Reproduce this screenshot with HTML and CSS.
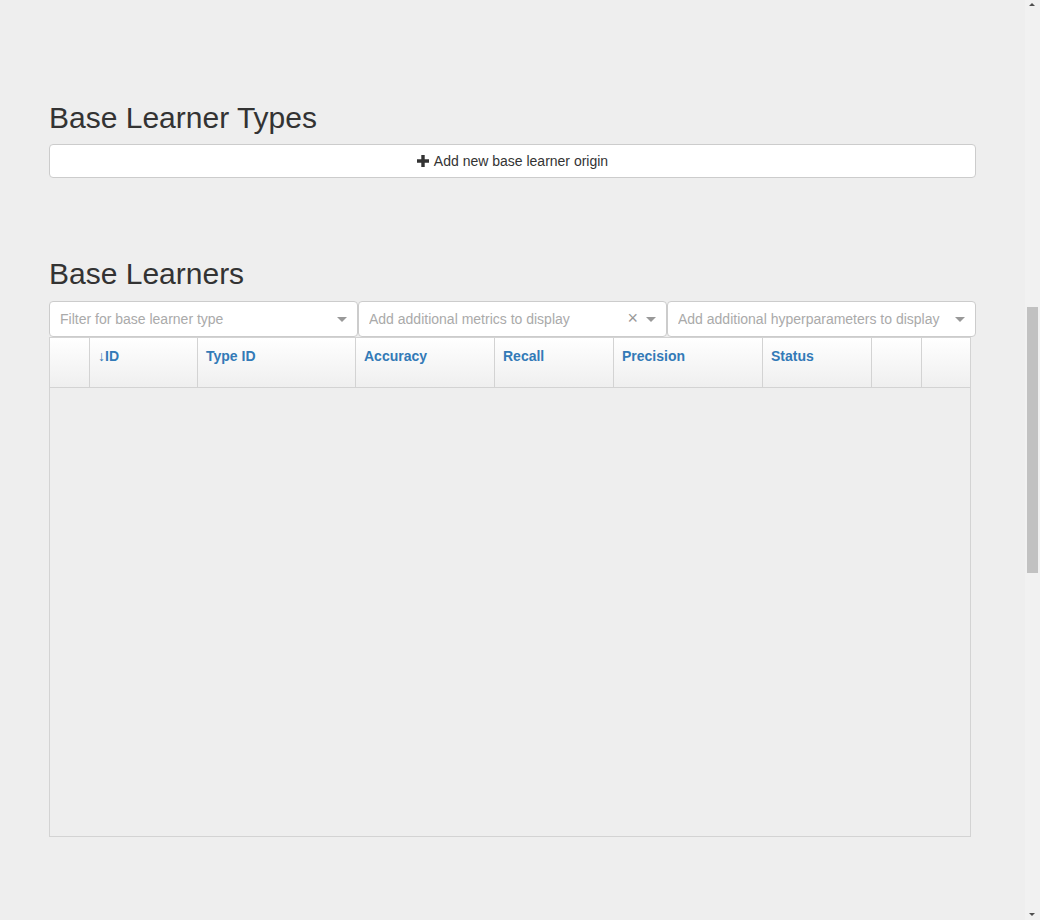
FILE: index.html
```html
<!DOCTYPE html>
<html lang="en">
<head>
<meta charset="utf-8">
<title>Base Learners</title>
<link rel="stylesheet" href="styles.css">
</head>
<body>
<div class="page">
  <section class="section section-types">
    <h2 class="title">Base Learner Types</h2>
    <button class="btn" type="button">
      <svg class="plus" width="12" height="12" viewBox="0 0 12 12" aria-hidden="true"><path d="M4.3 0h3.4v4.3H12v3.4H7.7V12H4.3V7.7H0V4.3h4.3z" fill="#333"/></svg>
      <span>Add new base learner origin</span>
    </button>
  </section>

  <section class="section section-learners">
    <h2 class="title">Base Learners</h2>
    <div class="filters">
      <div class="select">
        <span class="placeholder">Filter for base learner type</span>
        <span class="arrow"></span>
      </div>
      <div class="select">
        <span class="placeholder">Add additional metrics to display</span>
        <span class="clear">×</span>
        <span class="arrow"></span>
      </div>
      <div class="select">
        <span class="placeholder">Add additional hyperparameters to display</span>
        <span class="arrow"></span>
      </div>
    </div>
    <div class="grid">
      <div class="grid-head">
        <div class="cell c1"></div>
        <div class="cell c2"><span class="sort">↓</span>ID</div>
        <div class="cell c3">Type ID</div>
        <div class="cell c4">Accuracy</div>
        <div class="cell c5">Recall</div>
        <div class="cell c6">Precision</div>
        <div class="cell c7">Status</div>
        <div class="cell c8"></div>
        <div class="cell c9"></div>
      </div>
      <div class="grid-body"></div>
    </div>
  </section>
</div>

<div class="scrollbar" aria-hidden="true">
  <span class="sb-up"></span>
  <span class="sb-thumb"></span>
  <span class="sb-down"></span>
</div>
</body>
</html>
```

FILE: styles.css
```css
html, body {
  margin: 0;
  padding: 0;
  background: #eeeeee;
  overflow: hidden;
}

body {
  font-family: "Liberation Sans", Arial, Helvetica, sans-serif;
  font-size: 14px;
  line-height: 20px;
  color: #333333;
}

.page {
  width: 927px;
  padding-left: 49px;
  padding-top: 101px;
}

.title {
  margin: 0 0 10px 0;
  font-size: 30px;
  line-height: 33px;
  font-weight: 400;
  color: #333333;
}

.btn {
  display: flex;
  align-items: center;
  justify-content: center;
  gap: 5px;
  width: 100%;
  height: 34px;
  padding: 0 12px;
  margin: 0;
  background: #ffffff;
  border: 1px solid #cccccc;
  border-radius: 4px;
  font-family: inherit;
  font-size: 14px;
  line-height: 20px;
  color: #333333;
}

.plus {
  display: block;
  margin-top: -1px;
}

.section-learners {
  margin-top: 79px;
}

.section-learners .title {
  margin-bottom: 11px;
}

.filters {
  display: flex;
}

.select {
  position: relative;
  box-sizing: border-box;
  width: 309px;
  height: 36px;
  background: #ffffff;
  border: 1px solid #cccccc;
  border-radius: 4px;
  display: flex;
  align-items: center;
  padding: 0 10px;
}

.placeholder {
  flex: 1;
  color: #aaaaaa;
  white-space: nowrap;
  overflow: hidden;
  line-height: 34px;
}

.clear {
  color: #999999;
  font-size: 18px;
  line-height: 1;
  margin-right: 8px;
  margin-top: -3px;
}

.arrow {
  width: 0;
  height: 0;
  border-style: solid;
  border-width: 5px 5px 2.5px;
  border-color: #999999 transparent transparent;
  margin-right: 0;
  margin-top: 3px;
}

.grid {
  box-sizing: border-box;
  width: 922px;
  height: 500px;
  border: 1px solid #d3d3d3;
}

.grid-head {
  display: grid;
  grid-template-columns: 40px 108px 158px 139px 119px 149px 109px 50px 48px;
  height: 50px;
  box-sizing: border-box;
  border-bottom: 1px solid #d3d3d3;
  background: linear-gradient(#ffffff, #efefef);
}

.cell {
  box-sizing: border-box;
  border-right: 1px solid #d3d3d3;
  padding: 8px 8px 0;
  font-weight: 700;
  color: #337ab7;
  white-space: nowrap;
}

.cell.c9 {
  border-right: none;
}

.sort {
  font-weight: 400;
}

.grid-body {
  height: 448px;
}

.scrollbar {
  position: fixed;
  top: 0;
  right: 0;
  width: 15px;
  height: 920px;
  background: #f1f1f1;
}

.sb-thumb {
  position: absolute;
  left: 2px;
  top: 307px;
  width: 11px;
  height: 266px;
  background: #c1c1c1;
}

.sb-up,
.sb-down {
  position: absolute;
  left: 4px;
  width: 0;
  height: 0;
  border-style: solid;
}

.sb-up {
  top: 3px;
  border-width: 0 3.5px 3.5px;
  border-color: transparent transparent #505050;
}

.sb-down {
  bottom: 4px;
  border-width: 3.5px 3.5px 0;
  border-color: #505050 transparent transparent;
}
```
